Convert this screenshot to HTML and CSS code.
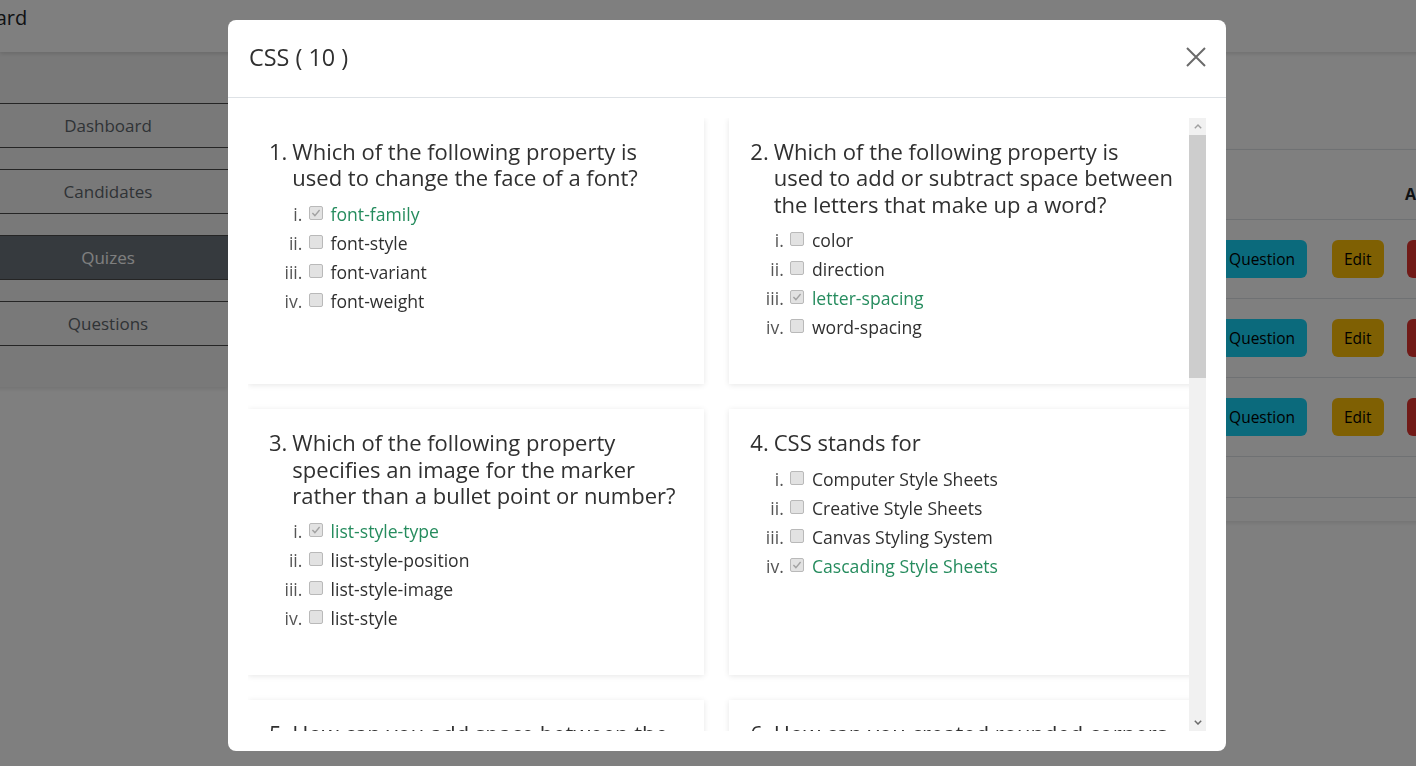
FILE: index.html
```html
<!DOCTYPE html>
<html lang="en">
<head>
<meta charset="utf-8">
<title>Quizes</title>
<link rel="stylesheet" href="styles.css">
</head>
<body>
<div class="app">
  <nav class="topbar">
    <span class="brand">Dashboard</span>
  </nav>
  <div class="layout">
    <aside class="sidebar">
      <a class="side-link">Dashboard</a>
      <a class="side-link">Candidates</a>
      <a class="side-link active">Quizes</a>
      <a class="side-link">Questions</a>
    </aside>
    <main class="main">
      <div class="table-card">
        <table class="quiz-table">
          <colgroup>
            <col class="c-id"><col class="c-name"><col class="c-add"><col class="c-edit"><col class="c-del">
          </colgroup>
          <thead>
            <tr><th></th><th></th><th></th><th></th><th>Actions</th></tr>
          </thead>
          <tbody>
            <tr>
              <td></td><td></td>
              <td class="cell-add"><a class="btn btn-info">Add Question</a></td>
              <td><a class="btn btn-warning">Edit</a></td>
              <td><a class="btn btn-danger">Delete</a></td>
            </tr>
            <tr>
              <td></td><td></td>
              <td class="cell-add"><a class="btn btn-info">Add Question</a></td>
              <td><a class="btn btn-warning">Edit</a></td>
              <td><a class="btn btn-danger">Delete</a></td>
            </tr>
            <tr>
              <td></td><td></td>
              <td class="cell-add"><a class="btn btn-info">Add Question</a></td>
              <td><a class="btn btn-warning">Edit</a></td>
              <td><a class="btn btn-danger">Delete</a></td>
            </tr>
          </tbody>
          <tfoot>
            <tr><td colspan="5"></td></tr>
          </tfoot>
        </table>
      </div>
    </main>
  </div>
</div>

<div class="modal-layer">
  <div class="modal">
    <div class="modal-header">
      <h4 class="modal-title">CSS ( 10 )</h4>
      <button class="modal-close" aria-label="Close">
        <svg width="20" height="20" viewBox="0 0 20 20"><path d="M1 1 L19 19 M19 1 L1 19" stroke="#6a6a6a" stroke-width="2" fill="none"/></svg>
      </button>
    </div>
    <div class="modal-body">
      <div class="q-viewport">
        <div class="q-grid">
          <div class="q-card">
            <div class="q-head"><span class="q-num">1.</span><span class="q-text">Which of the following property is used to change the face of a font?</span></div>
            <ol class="q-opts">
              <li class="correct"><span class="box"><svg class="tick" width="12" height="12" viewBox="0 0 12 12"><polyline points="2.4,6 4.9,8.6 9.6,3" fill="none" stroke="#a2a2a2" stroke-width="1.4"/></svg></span> font-family</li>
              <li><span class="box"></span> font-style</li>
              <li><span class="box"></span> font-variant</li>
              <li><span class="box"></span> font-weight</li>
            </ol>
          </div>
          <div class="q-card">
            <div class="q-head"><span class="q-num">2.</span><span class="q-text">Which of the following property is used to add or subtract space between the letters that make up a word?</span></div>
            <ol class="q-opts">
              <li><span class="box"></span> color</li>
              <li><span class="box"></span> direction</li>
              <li class="correct"><span class="box"><svg class="tick" width="12" height="12" viewBox="0 0 12 12"><polyline points="2.4,6 4.9,8.6 9.6,3" fill="none" stroke="#a2a2a2" stroke-width="1.4"/></svg></span> letter-spacing</li>
              <li><span class="box"></span> word-spacing</li>
            </ol>
          </div>
          <div class="q-card">
            <div class="q-head"><span class="q-num">3.</span><span class="q-text">Which of the following property specifies an image for the marker rather than a bullet point or number?</span></div>
            <ol class="q-opts">
              <li class="correct"><span class="box"><svg class="tick" width="12" height="12" viewBox="0 0 12 12"><polyline points="2.4,6 4.9,8.6 9.6,3" fill="none" stroke="#a2a2a2" stroke-width="1.4"/></svg></span> list-style-type</li>
              <li><span class="box"></span> list-style-position</li>
              <li><span class="box"></span> list-style-image</li>
              <li><span class="box"></span> list-style</li>
            </ol>
          </div>
          <div class="q-card">
            <div class="q-head"><span class="q-num">4.</span><span class="q-text">CSS stands for</span></div>
            <ol class="q-opts">
              <li><span class="box"></span> Computer Style Sheets</li>
              <li><span class="box"></span> Creative Style Sheets</li>
              <li><span class="box"></span> Canvas Styling System</li>
              <li class="correct"><span class="box"><svg class="tick" width="12" height="12" viewBox="0 0 12 12"><polyline points="2.4,6 4.9,8.6 9.6,3" fill="none" stroke="#a2a2a2" stroke-width="1.4"/></svg></span> Cascading Style Sheets</li>
            </ol>
          </div>
          <div class="q-card">
            <div class="q-head"><span class="q-num">5.</span><span class="q-text">How can you add space between the border and inner content of the element?</span></div>
            <ol class="q-opts">
              <li><span class="box"></span> margin</li>
              <li class="correct"><span class="box"><svg class="tick" width="12" height="12" viewBox="0 0 12 12"><polyline points="2.4,6 4.9,8.6 9.6,3" fill="none" stroke="#a2a2a2" stroke-width="1.4"/></svg></span> padding</li>
              <li><span class="box"></span> spacing</li>
              <li><span class="box"></span> border</li>
            </ol>
          </div>
          <div class="q-card">
            <div class="q-head"><span class="q-num">6.</span><span class="q-text">How can you created rounded corners using CSS3?</span></div>
            <ol class="q-opts">
              <li><span class="box"></span> border[round]: 30px;</li>
              <li><span class="box"></span> corner-effect: round;</li>
              <li class="correct"><span class="box"><svg class="tick" width="12" height="12" viewBox="0 0 12 12"><polyline points="2.4,6 4.9,8.6 9.6,3" fill="none" stroke="#a2a2a2" stroke-width="1.4"/></svg></span> border-radius: 30px;</li>
              <li><span class="box"></span> alpha-effect: round-corner;</li>
            </ol>
          </div>
          <div class="q-card">
            <div class="q-head"><span class="q-num">7.</span><span class="q-text">Which of the following property is used to set the background color of an element?</span></div>
            <ol class="q-opts">
              <li class="correct"><span class="box"><svg class="tick" width="12" height="12" viewBox="0 0 12 12"><polyline points="2.4,6 4.9,8.6 9.6,3" fill="none" stroke="#a2a2a2" stroke-width="1.4"/></svg></span> background-color</li>
              <li><span class="box"></span> color</li>
              <li><span class="box"></span> bgcolor</li>
              <li><span class="box"></span> background-image</li>
            </ol>
          </div>
          <div class="q-card">
            <div class="q-head"><span class="q-num">8.</span><span class="q-text">Which property is used to change the text color of an element?</span></div>
            <ol class="q-opts">
              <li><span class="box"></span> text-color</li>
              <li><span class="box"></span> fgcolor</li>
              <li class="correct"><span class="box"><svg class="tick" width="12" height="12" viewBox="0 0 12 12"><polyline points="2.4,6 4.9,8.6 9.6,3" fill="none" stroke="#a2a2a2" stroke-width="1.4"/></svg></span> color</li>
              <li><span class="box"></span> font-color</li>
            </ol>
          </div>
          <div class="q-card">
            <div class="q-head"><span class="q-num">9.</span><span class="q-text">Which property is used to make the text bold?</span></div>
            <ol class="q-opts">
              <li><span class="box"></span> font-style</li>
              <li class="correct"><span class="box"><svg class="tick" width="12" height="12" viewBox="0 0 12 12"><polyline points="2.4,6 4.9,8.6 9.6,3" fill="none" stroke="#a2a2a2" stroke-width="1.4"/></svg></span> font-weight</li>
              <li><span class="box"></span> text-decoration</li>
              <li><span class="box"></span> text-transform</li>
            </ol>
          </div>
          <div class="q-card">
            <div class="q-head"><span class="q-num">10.</span><span class="q-text">Which CSS property controls the text size?</span></div>
            <ol class="q-opts">
              <li class="correct"><span class="box"><svg class="tick" width="12" height="12" viewBox="0 0 12 12"><polyline points="2.4,6 4.9,8.6 9.6,3" fill="none" stroke="#a2a2a2" stroke-width="1.4"/></svg></span> font-size</li>
              <li><span class="box"></span> text-size</li>
              <li><span class="box"></span> font-style</li>
              <li><span class="box"></span> text-style</li>
            </ol>
          </div>
        </div>
      </div>
      <div class="scrollbar">
        <span class="sb-btn"><svg width="8" height="5" viewBox="0 0 8 5"><polyline points="0.8,4.2 4,1 7.2,4.2" fill="none" stroke="#a0a0a0" stroke-width="1.4"/></svg></span>
        <span class="sb-thumb"></span>
        <span class="sb-track"></span>
        <span class="sb-btn"><svg width="8" height="5" viewBox="0 0 8 5"><polyline points="0.8,0.8 4,4 7.2,0.8" fill="none" stroke="#6a6a6a" stroke-width="1.5"/></svg></span>
      </div>
    </div>
  </div>
</div>
</body>
</html>
```

FILE: styles.css
```css
* {
  box-sizing: border-box;
}

html,
body {
  margin: 0;
  height: 100%;
}

body {
  font-family: "Open Sans", "Noto Sans", sans-serif;
  color: #212529;
  background: #fff;
  overflow: hidden;
}

/* ---------- page behind the modal ---------- */
.app {
  width: 1500px;
  min-height: 100vh;
}

.topbar {
  position: relative;
  z-index: 1;
  height: 52px;
  padding-top: 4px;
  background: #fff;
  box-shadow: 0 2px 4px rgba(0, 0, 0, 0.12);
}

.brand {
  display: inline-block;
  margin-left: -76px;
  font-size: 20px;
  color: #212529;
  white-space: nowrap;
}

.layout {
  display: flex;
  align-items: flex-start;
}

.sidebar {
  flex-shrink: 0;
  width: 240px;
  margin-left: -12px;
  padding: 51px 0 41px;
  display: flex;
  flex-direction: column;
  gap: 21px;
  background: #f3f3f3;
  box-shadow: 0 2px 4px rgba(0, 0, 0, 0.1);
}

.side-link {
  display: block;
  height: 45px;
  line-height: 43px;
  border-top: 1px solid #4a4a4a;
  border-bottom: 1px solid #4a4a4a;
  text-align: center;
  font-size: 17px;
  color: #5f666d;
}

.side-link.active {
  background: #6c757d;
  color: #fff;
}

.main {
  flex: 1;
  padding: 97px 0 0 24px;
}

.table-card {
  width: 1243px;
  padding-bottom: 23px;
  background: #fff;
  box-shadow: 0 2px 4px rgba(0, 0, 0, 0.1);
}

.quiz-table {
  width: 1243px;
  table-layout: fixed;
  border-collapse: collapse;
  border-top: 1px solid #dee2e6;
  border-bottom: 1px solid #dee2e6;
  font-size: 16px;
}

.c-id { width: 60px; }
.c-name { width: 858px; }
.c-add { width: 150px; }
.c-edit { width: 75px; }
.c-del { width: 100px; }

.quiz-table th {
  height: 70px;
  padding: 0 10px 13px;
  vertical-align: bottom;
  text-align: left;
  font-weight: 700;
  line-height: 24px;
}

.quiz-table td {
  height: 79px;
  padding: 0 12px;
  border-top: 1px solid #dee2e6;
  vertical-align: middle;
}

.quiz-table tfoot td {
  height: 41px;
}

.quiz-table .cell-add {
  text-align: right;
  padding-right: 13px;
}

.btn {
  display: inline-block;
  padding: 7px 12px;
  border-radius: 6px;
  font-size: 15.5px;
  line-height: 24px;
  white-space: nowrap;
}

.btn-info {
  background: #17d4f8;
  color: #000;
}

.btn-warning {
  background: #ffc107;
  color: #000;
}

.btn-danger {
  background: #e3342f;
  color: #fff;
}

/* ---------- modal ---------- */
.modal-layer {
  position: fixed;
  inset: 0;
  z-index: 10;
  background: rgba(0, 0, 0, 0.5);
}

.modal {
  width: 998px;
  height: 731px;
  margin: 20px 0 0 228px;
  display: flex;
  flex-direction: column;
  overflow: hidden;
  background: #fff;
  border-radius: 8px;
}

.modal-header {
  flex: 0 0 78px;
  display: flex;
  align-items: center;
  justify-content: space-between;
  padding: 0 20px 4px 21px;
  border-bottom: 1px solid #dee2e6;
}

.modal-title {
  margin: 0;
  font-size: 23.4px;
  font-weight: 400;
  color: #303030;
}

.modal-close {
  display: flex;
  padding: 0;
  border: 0;
  background: none;
}

.modal-body {
  flex: 1;
  min-height: 0;
  display: flex;
  padding: 20px;
}

.q-viewport {
  flex: 1;
  min-width: 0;
  overflow: hidden;
}

.q-grid {
  display: grid;
  grid-template-columns: 1fr 1fr;
  column-gap: 25px;
  row-gap: 25px;
}

.q-card {
  padding: 20px 12px 42px 21px;
  background: #fff;
  box-shadow: 0 1px 6px rgba(0, 0, 0, 0.1);
}

.q-head {
  display: flex;
  gap: 5px;
  font-size: 22px;
  line-height: 1.2;
  color: #303030;
}

.q-num {
  flex: none;
}

.q-text {
  flex: 0 0 400px;
}

.q-opts {
  margin: 9px 0 0;
  padding-left: 38px;
  list-style: lower-roman;
  font-size: 17.6px;
  line-height: 29px;
  color: #303030;
}

.q-opts li::marker {
  color: #555;
}

/* read-only answer checkbox */
.box {
  display: inline-block;
  width: 14px;
  height: 14px;
  margin: 0 3px 0 2px;
  vertical-align: 1px;
  border: 1px solid #b9b9b9;
  border-radius: 2px;
  background: #e2e2e2;
}

.tick {
  display: block;
}

.q-opts .correct {
  color: #268c5e;
}

/* drawn scrollbar of the question list */
.scrollbar {
  flex: 0 0 17px;
  display: flex;
  flex-direction: column;
  background: #f1f1f1;
}

.sb-btn {
  flex: 0 0 17px;
  display: flex;
  align-items: center;
  justify-content: center;
}

.sb-thumb {
  flex: 0 0 243px;
  background: #cdcdcd;
}

.sb-track {
  flex: 1;
}
```
